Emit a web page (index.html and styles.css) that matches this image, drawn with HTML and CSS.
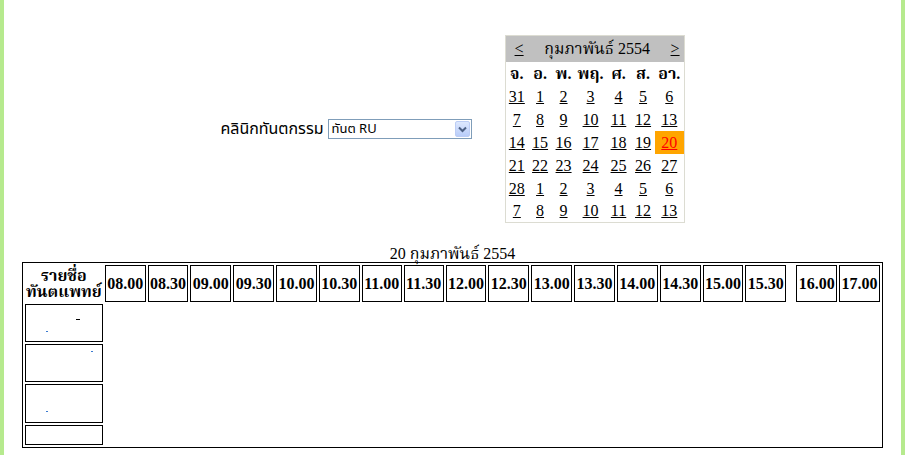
FILE: index.html
```html
<!DOCTYPE html>
<html lang="th">
<head>
    <meta charset="UTF-8">
    <title>ตารางนัดทันตแพทย์</title>
    <link rel="stylesheet" href="styles.css">
</head>
<body>
<div class="page">
    <div class="top">
        <div class="clinic">
            <span class="clinic-label">คลินิกทันตกรรม</span>
            <div class="select">
                <span class="select-text">ทันต RU</span>
                <span class="select-btn">
                    <svg width="9" height="7" viewBox="0 0 9 7"><path d="M1 1.5 L4.5 5 L8 1.5" fill="none" stroke="#4d6185" stroke-width="2"/></svg>
                </span>
            </div>
        </div>
        <table class="cal">
            <colgroup>
                <col class="c23"><col class="c24"><col class="c23"><col class="c31"><col class="c25"><col class="c24"><col class="c29">
            </colgroup>
            <tr>
                <td colspan="7" class="cal-title">
                    <div class="cal-nav">
                        <a href="#">&lt;</a>
                        <span>กุมภาพันธ์ 2554</span>
                        <a href="#">&gt;</a>
                    </div>
                </td>
            </tr>
            <tr class="cal-days">
                <th>จ.</th><th>อ.</th><th>พ.</th><th>พฤ.</th><th>ศ.</th><th>ส.</th><th>อา.</th>
            </tr>
            <tr><td><a href="#">31</a></td><td><a href="#">1</a></td><td><a href="#">2</a></td><td><a href="#">3</a></td><td><a href="#">4</a></td><td><a href="#">5</a></td><td><a href="#">6</a></td></tr>
            <tr><td><a href="#">7</a></td><td><a href="#">8</a></td><td><a href="#">9</a></td><td><a href="#">10</a></td><td><a href="#">11</a></td><td><a href="#">12</a></td><td><a href="#">13</a></td></tr>
            <tr><td><a href="#">14</a></td><td><a href="#">15</a></td><td><a href="#">16</a></td><td><a href="#">17</a></td><td><a href="#">18</a></td><td><a href="#">19</a></td><td class="today"><a href="#">20</a></td></tr>
            <tr><td><a href="#">21</a></td><td><a href="#">22</a></td><td><a href="#">23</a></td><td><a href="#">24</a></td><td><a href="#">25</a></td><td><a href="#">26</a></td><td><a href="#">27</a></td></tr>
            <tr><td><a href="#">28</a></td><td><a href="#">1</a></td><td><a href="#">2</a></td><td><a href="#">3</a></td><td><a href="#">4</a></td><td><a href="#">5</a></td><td><a href="#">6</a></td></tr>
            <tr><td><a href="#">7</a></td><td><a href="#">8</a></td><td><a href="#">9</a></td><td><a href="#">10</a></td><td><a href="#">11</a></td><td><a href="#">12</a></td><td><a href="#">13</a></td></tr>
        </table>
    </div>

    <div class="caption">20 กุมภาพันธ์ 2554</div>

    <table class="sched">
        <tr class="head-row">
            <th class="doc-head">รายชื่อ<br>ทันตแพทย์</th>
            <th class="time">08.00</th>
            <th class="time">08.30</th>
            <th class="time">09.00</th>
            <th class="time">09.30</th>
            <th class="time">10.00</th>
            <th class="time">10.30</th>
            <th class="time">11.00</th>
            <th class="time">11.30</th>
            <th class="time">12.00</th>
            <th class="time">12.30</th>
            <th class="time">13.00</th>
            <th class="time">13.30</th>
            <th class="time">14.00</th>
            <th class="time">14.30</th>
            <th class="time">15.00</th>
            <th class="time">15.30</th>
            <th class="gap"></th>
            <th class="time">16.00</th>
            <th class="time">17.00</th>
        </tr>
        <tr class="row-tall">
            <td class="doc"><span class="dot d1"></span><span class="dot d2"></span></td>
            <td colspan="19"></td>
        </tr>
        <tr class="row-tall">
            <td class="doc"><span class="dot d3"></span></td>
            <td colspan="19"></td>
        </tr>
        <tr class="row-tall3">
            <td class="doc"><span class="dot d2"></span></td>
            <td colspan="19"></td>
        </tr>
        <tr class="row-short">
            <td class="doc"></td>
            <td colspan="19"></td>
        </tr>
    </table>
</div>
</body>
</html>
```

FILE: styles.css
```css
body {
    margin: 0;
    background-color: #b6ea8e;
    font-family: "Liberation Serif", "Noto Serif Thai", "Tlwg Typo", "Norasi", serif;
    font-size: 16px;
    color: #000;
}
.page {
    background-color: #fff;
    margin: 0 4px;
    min-height: 455px;
    padding-top: 35px;
    box-sizing: border-box;
    overflow: hidden;
}
.top {
    display: flex;
    justify-content: center;
    align-items: center;
    gap: 33px;
}
.clinic {
    display: flex;
    align-items: center;
    gap: 4px;
}
.clinic-label {
    font-family: "Noto Sans Thai", "Loma", "DejaVu Sans", sans-serif;
    font-size: 16px;
}
.select {
    width: 144px;
    height: 20px;
    box-sizing: border-box;
    border: 1px solid #7f9db9;
    display: flex;
    align-items: center;
    font-family: "Noto Sans Thai", "Loma", "Liberation Sans", sans-serif;
    font-size: 13px;
}
.select-text {
    flex: 1;
    padding-left: 3px;
}
.select-btn {
    width: 15px;
    height: 16px;
    box-sizing: border-box;
    margin-right: 1px;
    background: linear-gradient(#dde8fe, #b9cdf9);
    border: 1px solid #bccdf5;
    border-radius: 2px;
    display: flex;
    align-items: center;
    justify-content: center;
}

/* calendar */
.cal {
    border: 1px solid #dcdcd2;
    border-collapse: collapse;
    table-layout: fixed;
    line-height: 19px;
}
.c23 { width: 23px; }
.c24 { width: 24px; }
.c25 { width: 25px; }
.c29 { width: 29px; }
.c31 { width: 31px; }
.cal td, .cal th {
    padding: 0;
    height: 23px;
    box-sizing: border-box;
    text-align: center;
}
.cal a {
    color: #000;
    text-decoration: underline;
}
.cal-title {
    background-color: #c0c0c0;
}
.cal .cal-title {
    height: 26px;
}
.cal-nav {
    display: flex;
    justify-content: space-between;
    align-items: center;
    padding: 0 4px 0 9px;
}
.cal-days th {
    font-weight: bold;
    white-space: nowrap;
}
.cal .today {
    background-color: #ffa500;
}
.cal .today a {
    color: #f00;
}

.caption {
    text-align: center;
    margin-top: 23px;
    line-height: 16px;
}

/* schedule */
.sched {
    width: 861px;
    margin: 0 auto;
    border: 1px solid #000;
    border-spacing: 2px;
}
.sched th {
    font-weight: bold;
    padding: 0 1px;
    white-space: nowrap;
}
.head-row th {
    height: 37px;
    box-sizing: border-box;
}
.sched .doc-head {
    width: 77px;
    line-height: 16px;
    white-space: normal;
}
.sched .time {
    border: 1px solid #000;
}
.sched .gap {
    width: 6px;
}
.sched td {
    padding: 0;
    box-sizing: border-box;
}
.sched .doc {
    border: 1px solid #000;
    position: relative;
}
.row-tall td { height: 38px; }
.row-tall3 td { height: 39px; }
.row-short td { height: 20px; }
.dot {
    position: absolute;
    width: 2px;
    height: 1px;
    background-color: #3a7ad0;
}
.d1 { left: 50px; top: 14px; width: 4px; background-color: #000; }
.d2 { left: 20px; top: 26px; }
.d3 { left: 65px; top: 6px; }
```
